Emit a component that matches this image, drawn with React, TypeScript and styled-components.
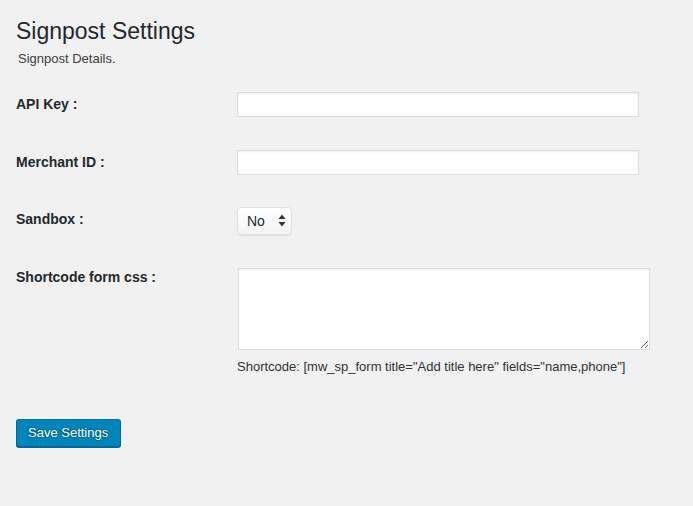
import React from "react";
import styled, { createGlobalStyle } from "styled-components";

const Global = createGlobalStyle`
  html, body {
    margin: 0;
    padding: 0;
    background: #f1f1f1;
  }
  body {
    font-family: "Liberation Sans", Arial, sans-serif;
    color: #23282d;
    font-size: 13px;
    line-height: 1.4;
  }
`;

const Page = styled.div`
  padding: 8px 16px 40px 16px;
  min-height: 458px;
  background: #f1f1f1;
`;

const Title = styled.h1`
  margin: 0;
  padding: 9px 15px 4px 0;
  font-size: 23px;
  font-weight: 400;
  line-height: 29px;
  color: #23282d;
`;

const Subtitle = styled.p`
  margin: 0 0 0 2px;
  font-size: 13px;
  line-height: 18px;
  color: #3c3c3c;
`;

const Form = styled.form`
  display: flex;
  flex-direction: column;
  gap: 33px;
  padding-top: 24px;
`;

const Row = styled.div`
  display: grid;
  grid-template-columns: 221px 1fr;
  align-items: start;
`;

const Label = styled.label<{ $offset: number }>`
  padding-top: ${(p) => p.$offset}px;
  font-size: 14px;
  font-weight: 700;
  line-height: 18px;
  color: #23282d;
`;

const Field = styled.div`
  display: flex;
  flex-direction: column;
  align-items: flex-start;
`;

const TextInput = styled.input`
  box-sizing: border-box;
  width: 402px;
  height: 25px;
  margin: 0;
  padding: 3px 5px;
  border: 1px solid #ddd;
  background: #fff;
  box-shadow: inset 0 1px 2px rgba(0, 0, 0, 0.07);
  font-family: inherit;
  font-size: 14px;
  outline: none;
`;

const SelectWrap = styled.div`
  position: relative;
  width: 55px;
  height: 28px;
  margin-top: -1px;
`;

const Select = styled.select`
  appearance: none;
  -webkit-appearance: none;
  box-sizing: border-box;
  width: 55px;
  height: 28px;
  margin: 0;
  padding: 0 0 0 9px;
  border: 1px solid #e2e2e2;
  border-radius: 4px;
  background: linear-gradient(#ffffff, #f3f3f3);
  box-shadow: 0 1px 1px rgba(0, 0, 0, 0.08);
  font-family: inherit;
  font-size: 14px;
  color: #23282d;
  outline: none;
`;

const Arrows = styled.svg`
  position: absolute;
  right: 6px;
  top: 7px;
  pointer-events: none;
`;

const TextArea = styled.textarea`
  box-sizing: border-box;
  width: 412px;
  height: 82px;
  margin: 0 0 0 1px;
  padding: 2px 6px;
  border: 1px solid #ddd;
  background: #fff;
  box-shadow: inset 0 1px 2px rgba(0, 0, 0, 0.07);
  font-family: inherit;
  font-size: 14px;
  outline: none;
  display: block;
`;

const Description = styled.p`
  margin: 8px 0 0 0;
  font-size: 13px;
  line-height: 18px;
  color: #333;
`;

const Submit = styled.div`
  padding-top: 10px;
`;

const Button = styled.button`
  box-sizing: border-box;
  height: 28px;
  padding: 0 12px 1px 11px;
  border: 1px solid #0073aa;
  border-color: #0073aa #006799 #006799;
  border-radius: 3px;
  background: #0085ba;
  box-shadow: 0 1px 0 #006799;
  color: #fff;
  font-family: inherit;
  font-size: 13px;
  line-height: 26px;
  cursor: pointer;
  text-shadow: 0 -1px 1px #006799, 1px 0 1px #006799, 0 1px 1px #006799, -1px 0 1px #006799;
`;

export default function App() {
  return (
    <>
      <Global />
      <Page>
        <Title>Signpost Settings</Title>
        <Subtitle>Signpost Details.</Subtitle>
        <Form onSubmit={(e) => e.preventDefault()}>
          <Row>
            <Label $offset={3}>API Key :</Label>
            <Field>
              <TextInput type="text" />
            </Field>
          </Row>
          <Row>
            <Label $offset={3}>Merchant ID :</Label>
            <Field>
              <TextInput type="text" />
            </Field>
          </Row>
          <Row>
            <Label $offset={2}>Sandbox :</Label>
            <Field>
              <SelectWrap>
                <Select defaultValue="no">
                  <option value="no">No</option>
                  <option value="yes">Yes</option>
                </Select>
                <Arrows width="8" height="13" viewBox="0 0 8 13">
                  <path d="M4 0.5 L7.5 5 L0.5 5 Z" fill="#333" />
                  <path d="M4 12.5 L7.5 8 L0.5 8 Z" fill="#333" />
                </Arrows>
              </SelectWrap>
            </Field>
          </Row>
          <Row>
            <Label $offset={0}>Shortcode form css :</Label>
            <Field>
              <TextArea />
              <Description>
                Shortcode: [mw_sp_form title="Add title here" fields="name,phone"]
              </Description>
            </Field>
          </Row>
          <Submit>
            <Button type="submit">Save Settings</Button>
          </Submit>
        </Form>
      </Page>
    </>
  );
}
